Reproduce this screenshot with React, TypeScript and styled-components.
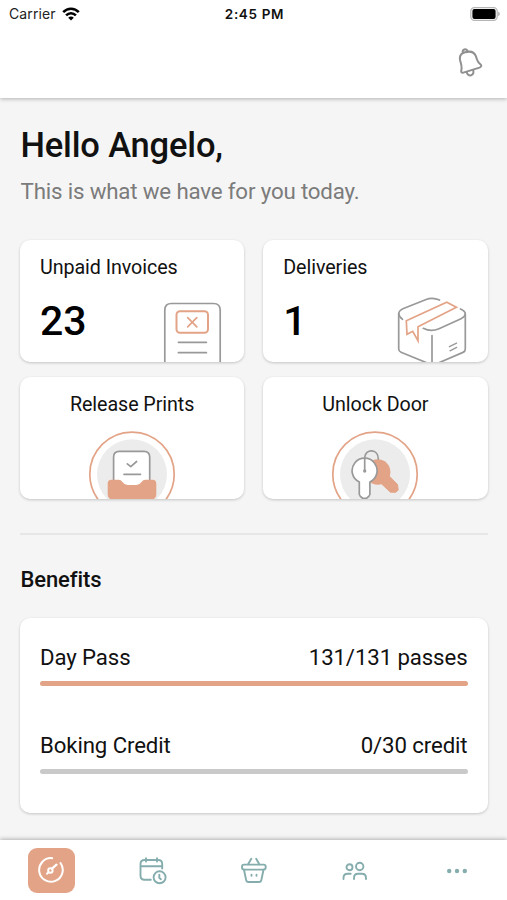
import React from "react";
import styled, { createGlobalStyle } from "styled-components";

const ORANGE = "#e3a386";
const GRAY = "#999999";
const TEAL = "#86adad";

const GlobalStyle = createGlobalStyle`
  * { box-sizing: border-box; }
  body { margin: 0; background: #f5f5f5; }
  h1, h2, p { margin: 0; }
  svg { display: block; }
`;

const Screen = styled.div`
  width: 100%;
  height: 900px;
  display: flex;
  flex-direction: column;
  overflow: hidden;
  background: #f5f5f5;
  color: #111;
  font-family: Roboto, "Liberation Sans", sans-serif;
`;

const Header = styled.header`
  height: 98px;
  flex: none;
  background: #fff;
  box-shadow: 0 1px 4px rgba(0, 0, 0, 0.28);
`;

const StatusBar = styled.div`
  height: 27px;
  padding: 0 7px 0 9px;
  display: grid;
  grid-template-columns: 1fr auto 1fr;
  align-items: center;
  font-family: Inter, sans-serif;
  font-size: 14px;
`;

const Carrier = styled.div`
  display: flex;
  align-items: center;
  gap: 6px;
  letter-spacing: 0.1px;
  color: #222;
`;

const Clock = styled.div`
  font-weight: 600;
  font-size: 13.5px;
  letter-spacing: 0.65px;
`;

const BatterySlot = styled.div`
  justify-self: end;
`;

const Toolbar = styled.div`
  height: 70px;
  padding: 21px 24px 0 0;
  display: flex;
  justify-content: flex-end;
`;

const Content = styled.main`
  flex: 1;
  padding: 25px 19.5px 0 20px;
`;

const Greeting = styled.h1`
  padding-left: 0.5px;
  font-size: 34.5px;
  letter-spacing: -0.17px;
  line-height: 44px;
  font-weight: 500;
`;

const Subtitle = styled.p`
  margin-top: 11px;
  padding-left: 0.5px;
  font-size: 22.3px;
  letter-spacing: -0.17px;
  line-height: 27px;
  color: #7b7b7b;
`;

const CardGrid = styled.section`
  margin-top: 35px;
  display: grid;
  grid-template-columns: 1fr 1fr;
  grid-auto-rows: 122px;
  gap: 15px 19px;
`;

const Card = styled.div`
  background: #fff;
  border-radius: 10px;
  box-shadow: 0 1px 3px rgba(0, 0, 0, 0.2);
`;

const StatCard = styled(Card)`
  display: flex;
  justify-content: space-between;
  overflow: hidden;
  padding-left: 20px;
`;

const StatText = styled.div`
  padding-top: 15px;
  white-space: nowrap;
`;

const CardTitle = styled.div`
  font-size: 19.7px;
  letter-spacing: -0.07px;
  line-height: 26px;
`;

const StatValue = styled.div`
  margin-top: 14px;
  font-size: 41px;
  line-height: 52px;
  font-weight: 500;
  color: #000;
`;

const StatArt = styled.div<{ $right: number }>`
  align-self: flex-end;
  flex: none;
  margin-left: -60px;
  padding-right: ${(p) => p.$right}px;
`;

const ActionCard = styled(Card)`
  display: flex;
  flex-direction: column;
  align-items: center;
  justify-content: space-between;
  overflow: hidden;
  padding-top: 15px;
`;

const Divider = styled.hr`
  margin: 34px 0 0;
  border: 0;
  height: 2px;
  background: #e6e6e6;
`;

const SectionTitle = styled.h2`
  margin-top: 29px;
  padding-left: 0.5px;
  font-size: 22px;
  letter-spacing: -0.1px;
  line-height: 31px;
  font-weight: 500;
`;

const BenefitsCard = styled(Card)`
  margin-top: 23px;
  height: 195px;
  padding: 24px 20px 0;
  display: flex;
  flex-direction: column;
  gap: 44px;
`;

const BenefitLabels = styled.div`
  display: flex;
  justify-content: space-between;
  font-size: 22.2px;
  letter-spacing: -0.1px;
  line-height: 30px;
`;

const Track = styled.div`
  margin-top: 9px;
  height: 5px;
  border-radius: 3px;
  background: #c9c9c9;
  overflow: hidden;
`;

const Fill = styled.div`
  height: 100%;
  background: ${ORANGE};
`;

const TabBar = styled.nav`
  height: 60px;
  flex: none;
  display: grid;
  grid-template-columns: repeat(5, 1fr);
  justify-items: center;
  align-items: center;
  background: #fff;
  box-shadow: 0 -1px 4px rgba(0, 0, 0, 0.28);
`;

const Tab = styled.div<{ $active?: boolean }>`
  width: 47px;
  height: 45px;
  margin-left: ${(p) => (p.$active ? 1.5 : 1)}px;
  padding-top: ${(p) => (p.$active ? 0 : 1)}px;
  display: grid;
  place-items: center;
  border-radius: 9px;
  background: ${(p) => (p.$active ? ORANGE : "transparent")};
`;

const Wifi = () => (
  <svg width="18" height="14" viewBox="0 0 18 14" fill="none" stroke="#000" strokeWidth="2.5">
    <path d="M1.2 5.2C5.6.5 12.4.5 16.8 5.2" />
    <path d="M4.1 8.3c2.8-2.9 7-2.9 9.8 0" />
    <path d="M9 13.6 6.2 10.8c1.6-1.6 4-1.6 5.6 0Z" fill="#000" stroke="none" />
  </svg>
);

const Battery = () => (
  <svg width="30" height="14" viewBox="0 0 30 14">
    <rect x=".8" y=".6" width="26.4" height="12.8" rx="3.6" fill="#fff" stroke="#b5b5b5" strokeWidth="1.2" />
    <rect x="2.4" y="2.1" width="23.2" height="9.8" rx="2" fill="#000" />
    <path d="M28.2 4.8c2 .6 2 3.8 0 4.4Z" fill="#aaa" />
  </svg>
);

const Bell = () => (
  <svg width="25" height="30" viewBox="0 0 25 30" fill="none" stroke="#909090" strokeWidth="2" strokeLinecap="round" strokeLinejoin="round">
    <path d="M7 4.300C3 5.400 1.300 8.500 2.100 12.200c.9 3.700 2.200 6.800 1.200 10-.5 1.900.5 2.900 2 2.400l16.200-5c2-.7 2.300-2.300.9-3.300-2.700-2-3.600-4.800-4.500-8.100C16.400 4.500 12.500 2.700 7 4.300Z" />
    <path d="M4.900 4.900C4.400 3.300 5 2 6.300 1.500 7.900 1 9.300 1.900 9.700 3.500" />
    <path d="M8.700 24.200c.7 2.700 2.400 3.600 4.300 3.100 2-.6 2.900-2.400 2.200-5" />
  </svg>
);

const InvoiceArt = () => (
  <svg width="60" height="60" viewBox="0 0 60 60" fill="none" stroke={GRAY} strokeWidth="1.7" strokeLinecap="round" strokeLinejoin="round">
    <path d="M1.800 63V8.200Q1.800 1.500 8.500 1.500h42Q57.200 1.500 57.200 8.200V63" />
    <path d="M15.400 40.300h28M15.400 50.700h28" />
    <g stroke={ORANGE}>
      <rect x="13.500" y="9.300" width="31.500" height="21.500" rx="3.500" strokeWidth="2" />
      <path d="m24.700 15.700 9.100 9.100m0-9.100-9.100 9.100" />
    </g>
  </svg>
);

const BoxArt = () => (
  <svg width="72" height="66" viewBox="0 0 72 66" fill="none" stroke={GRAY} strokeWidth="1.7" strokeLinecap="round" strokeLinejoin="round">
    <path d="M43.500 4Q36.500 1 29.500 3.700L7.500 12.500Q2.700 14.600 2.700 18V53Q2.700 55.200 5 56.200L31.300 67" />
    <path d="M2.700 17.500Q3.200 21.300 6.500 23.300" />
    <path d="M64.500 13Q69.300 14.900 69.300 18V53Q69.300 55.400 67 56.400L40 68" />
    <path d="M69.300 18Q69 20.900 65 22.700L43 32.700Q35 36.300 27.300 32.300M36 39.500V68" />
    <path d="m53.400 50.700 7.200-3.600M54 54.800l6.700-3.400" strokeWidth="1.300" />
    <path d="M10.300 24.700 50.700 6.300l9.700 4.900L22 30.700v14L16.700 35.300 11 38.300Z" stroke={ORANGE} strokeLinejoin="miter" />
  </svg>
);

const PrintArt = () => (
  <svg width="88" height="69" viewBox="0 0 88 69" fill="none" stroke={GRAY} strokeWidth="1.700" strokeLinecap="round" strokeLinejoin="round">
    <circle cx="44" cy="44.300" r="42.200" stroke={ORANGE} />
    <circle cx="44" cy="44.300" r="35" fill="#ececec" stroke="none" />
    <path d="M25.600 56V27Q25.600 21.300 31.300 21.300H56Q61.700 21.300 61.700 27V56" fill="#fff" />
    <path d="m39.300 33.800 3.500 2.900 5.800-5.200M36 44.300h16.500" />
    <path d="M23.500 49.700H30.500Q33 49.700 34.500 51.900 36.500 54.900 39.500 54.900H48.500Q51.500 54.900 53.500 51.900 55 49.700 57.500 49.700H64.500Q68.300 49.700 68.300 53.500V64.500Q68.300 69.500 63.300 69.500H24.700Q19.700 69.500 19.700 64.500V53.500Q19.700 49.700 23.500 49.700Z" fill={ORANGE} stroke="none" />
  </svg>
);

const KeysArt = () => (
  <svg width="88" height="69" viewBox="0 0 88 69" fill="none" stroke={GRAY} strokeWidth="1.700" strokeLinecap="round" strokeLinejoin="round">
    <circle cx="44" cy="44.300" r="42.200" stroke={ORANGE} />
    <circle cx="44" cy="44.300" r="35" fill="#ececec" stroke="none" />
    <g fill={ORANGE} stroke="none">
      <circle cx="46.700" cy="42" r="12.700" />
      <path d="M57.700 45.500 66.500 54.500 67.200 60 65 62.200 59.500 62.200 48.500 52Z" stroke={ORANGE} strokeWidth="1" />
    </g>
    <path d="M28.300 52A12.500 12.500 0 1 1 38.900 52V64.500Q38.700 66 35.500 68.300H31.700Q28.500 66 28.300 64.500Z" fill="#fff" />
    <path d="M33.700 40.600V27.500C34.200 18.500 47.400 18.500 47.300 29" />
    <circle cx="33.700" cy="41" r=".8" fill={GRAY} />
  </svg>
);

const DashboardIcon = () => (
  <svg width="26" height="26" viewBox="0 0 26 26" fill="none" stroke="#fff" strokeWidth="2" strokeLinecap="round" strokeLinejoin="round">
    <path d="M14.200 1.200A11.800 11.800 0 1 0 22.500 6" />
    <path d="m14 11.700 4.500-4" strokeWidth="2.300" />
    <circle cx="12.400" cy="13.500" r="2.200" />
    <path d="m8.900 16.700 1.500-1.300" />
  </svg>
);

const CalendarIcon = () => (
  <svg width="28" height="28" viewBox="0 0 28 28" fill="none" stroke={TEAL} strokeWidth="1.900" strokeLinecap="round" strokeLinejoin="round">
    <path d="M11.800 22.800H5.500Q1.500 22.800 1.500 18.800V7Q1.500 3 5.500 3H19.200Q23.200 3 23.200 7V11.500M1.500 9.300H23.200M7 1.300V4.600M18 1.300V4.600" />
    <circle cx="20.600" cy="20.300" r="6" />
    <path d="M20.300 17.700v3l1.600 1.500" />
  </svg>
);

const BasketIcon = () => (
  <svg width="28" height="28" viewBox="0 0 28 28" fill="none" stroke={TEAL} strokeWidth="1.900" strokeLinecap="round" strokeLinejoin="round">
    <rect x="2" y="7.600" width="23.700" height="5" rx="2" />
    <path d="m4 12.800 2.100 10.100Q6.500 25 8.500 25H19Q21 25 21.400 22.900L23.500 12.800M8.100 7.300 11.300 1.800M19.300 7.300 16.200 1.800M11.500 17.800v1M16.500 17.800v1" />
  </svg>
);

const PeopleIcon = () => (
  <svg width="26" height="20" viewBox="0 0 26 20" fill="none" stroke={TEAL} strokeWidth="1.900" strokeLinecap="round">
    <circle cx="7.500" cy="6.300" r="3" />
    <circle cx="17.700" cy="5.500" r="3.700" />
    <path d="M1.500 18v-1Q1.500 12.800 5.700 12.800h3M12 18v-1Q12 12.800 16.200 12.800h3.500Q24 12.800 24 17v1" />
  </svg>
);

const MoreIcon = () => (
  <svg width="22" height="6" viewBox="0 0 22 6" fill={TEAL}>
    <circle cx="3.200" cy="3" r="2.200" />
    <circle cx="11" cy="3" r="2.200" />
    <circle cx="18.800" cy="3" r="2.200" />
  </svg>
);

const benefits = [
  { name: "Day Pass", amount: "131/131 passes", percent: 100 },
  { name: "Boking Credit", amount: "0/30 credit", percent: 0 },
];

export default function App() {
  return (
    <>
      <GlobalStyle />
      <Screen>
        <Header>
          <StatusBar>
            <Carrier>Carrier <Wifi /></Carrier>
            <Clock>2:45 PM</Clock>
            <BatterySlot><Battery /></BatterySlot>
          </StatusBar>
          <Toolbar><Bell /></Toolbar>
        </Header>
        <Content>
          <Greeting>Hello Angelo,</Greeting>
          <Subtitle>This is what we have for you today.</Subtitle>
          <CardGrid>
            <StatCard>
              <StatText>
                <CardTitle>Unpaid Invoices</CardTitle>
                <StatValue>23</StatValue>
              </StatText>
              <StatArt $right={21.500}><InvoiceArt /></StatArt>
            </StatCard>
            <StatCard>
              <StatText>
                <CardTitle>Deliveries</CardTitle>
                <StatValue>1</StatValue>
              </StatText>
              <StatArt $right={20}><BoxArt /></StatArt>
            </StatCard>
            <ActionCard>
              <CardTitle>Release Prints</CardTitle>
              <PrintArt />
            </ActionCard>
            <ActionCard>
              <CardTitle>Unlock Door</CardTitle>
              <KeysArt />
            </ActionCard>
          </CardGrid>
          <Divider />
          <SectionTitle>Benefits</SectionTitle>
          <BenefitsCard>
            {benefits.map((b) => (
              <div key={b.name}>
                <BenefitLabels>
                  <span>{b.name}</span>
                  <span>{b.amount}</span>
                </BenefitLabels>
                <Track><Fill style={{ width: `${b.percent}%` }} /></Track>
              </div>
            ))}
          </BenefitsCard>
        </Content>
        <TabBar>
          <Tab $active><DashboardIcon /></Tab>
          <Tab><CalendarIcon /></Tab>
          <Tab><BasketIcon /></Tab>
          <Tab><PeopleIcon /></Tab>
          <Tab><MoreIcon /></Tab>
        </TabBar>
      </Screen>
    </>
  );
}
